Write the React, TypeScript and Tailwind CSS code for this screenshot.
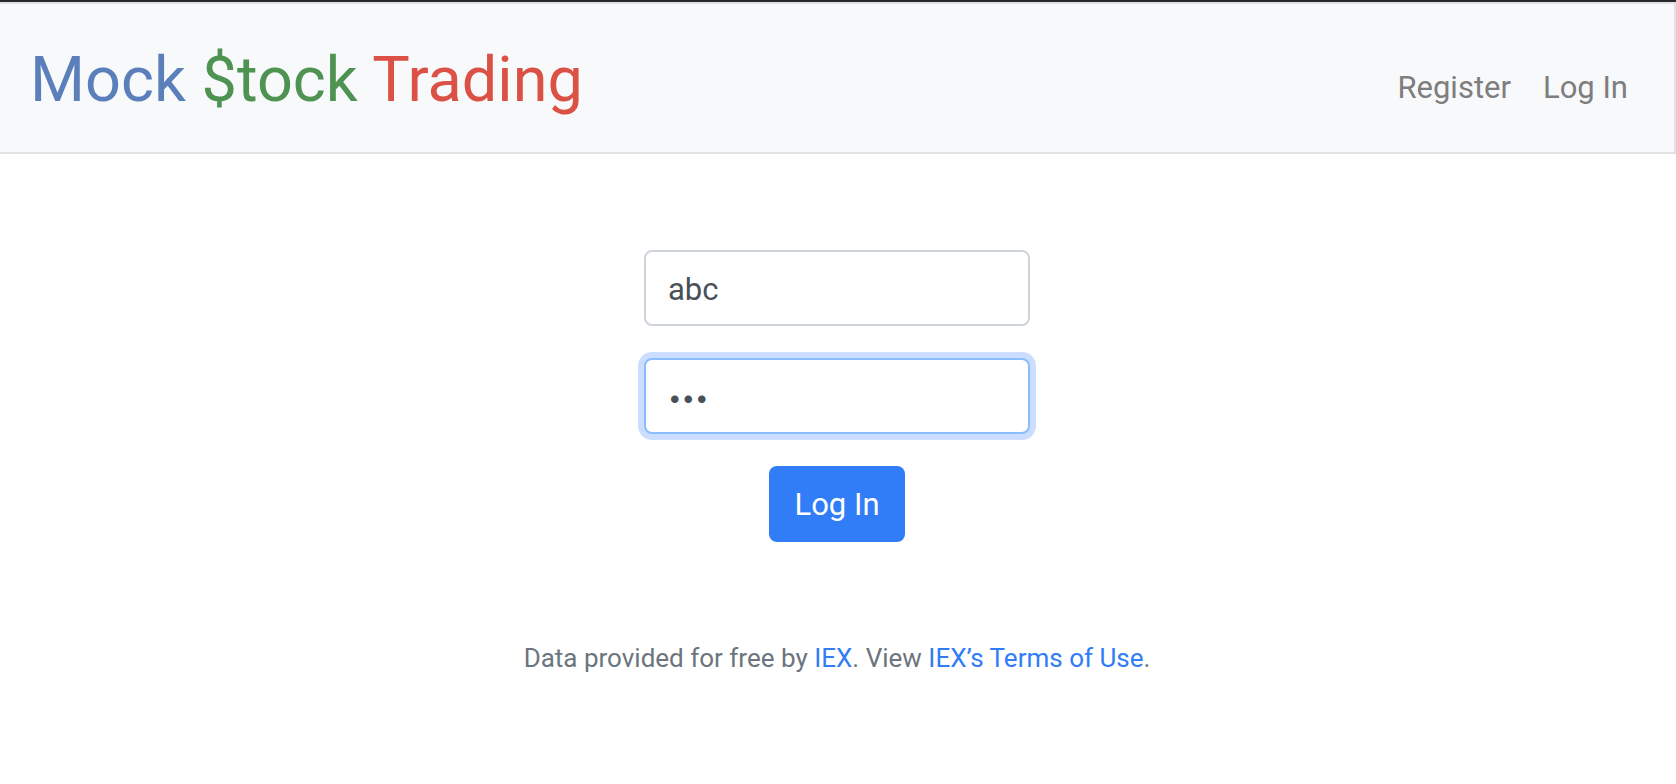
const fieldClass =
  "block h-19 w-full rounded-lg border-2 bg-white px-[22px] pt-0.5 leading-12 text-[#495057] outline-none";

const navLinkClass = "text-[#7e7e7e] hover:text-[#4d4d4d]";

export default function App() {
  return (
    <div className="min-h-screen bg-white font-[Roboto,sans-serif] text-[#212529]">
      <header className="mt-0.5 flex items-center justify-between border-2 border-l-0 border-[#e1e2e6] bg-[#f8f9fb] px-[30px] py-6 shadow-[0_-2px_0_#282828]">
        <a href="#home" className="pt-1 text-[63px] leading-24">
          <span className="text-[#5b7fbb]">Mock</span>{" "}
          <span className="text-[#4e9352]">$tock</span>{" "}
          <span className="text-[#db5145]">Trading</span>
        </a>
        <nav className="flex gap-8 pt-5 pr-4 text-[31px] leading-12">
          <a href="#register" className={navLinkClass}>
            Register
          </a>
          <a href="#login" className={navLinkClass}>
            Log In
          </a>
        </nav>
      </header>

      <main className="mr-0.5 px-8 pt-24">
        <form
          className="mx-auto flex w-[386px] max-w-full flex-col items-center gap-8"
          onSubmit={(event) => event.preventDefault()}
        >
          <input
            className={`${fieldClass} border-[#ced4da] text-[31px]`}
            type="text"
            name="username"
            aria-label="Username"
            autoComplete="off"
            defaultValue="abc"
          />
          <input
            className={`${fieldClass} border-[#8bbcfd] font-[Inter,sans-serif] text-[24px] shadow-[0_0_0_6px_#ccdeff]`}
            type="password"
            name="password"
            aria-label="Password"
            autoComplete="off"
            defaultValue="abc"
          />
          <button
            type="submit"
            className="h-19 rounded-lg bg-[#307df7] px-[25px] pt-0.5 text-[31px] leading-12 text-white"
          >
            Log In
          </button>
        </form>
      </main>

      <footer className="mr-0.5 px-8 pt-24 pb-8 text-center text-[26px] leading-10 text-[#6c757d]">
        Data provided for free by{" "}
        <a href="#iex" className="text-[#307df7]">
          IEX
        </a>
        . View{" "}
        <a href="#terms" className="text-[#307df7]">
          IEX’s Terms of Use
        </a>
        .
      </footer>
    </div>
  );
}
